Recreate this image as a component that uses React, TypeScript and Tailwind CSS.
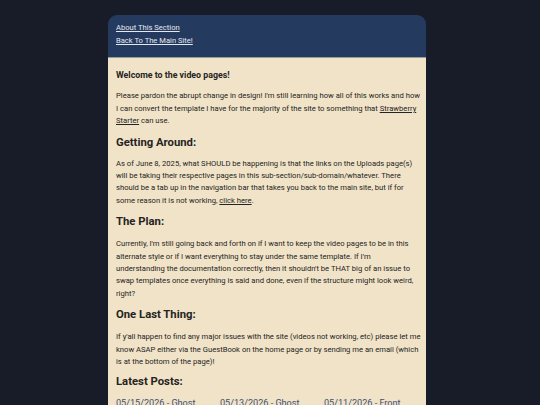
import React from 'react'

const posts = [
  '05/15/2026 - Ghost',
  '05/13/2026 - Ghost',
  '05/11/2026 - Front',
]

export default function App() {
  return (
    <div className="min-h-screen bg-[#181c29] pt-[15px] pr-[6px] font-['Roboto',sans-serif]">
      <div className="mx-auto w-[318px] overflow-hidden rounded-t-[9px]">
        <div className="bg-[#243a5e] px-2 pt-[6px] pb-[10px] text-[7.6px] leading-[13px] text-[#e3e8f1]">
          <a className="block underline" href="#">About This Section</a>
          <a className="block underline" href="#">Back To The Main Site!</a>
        </div>
        <div className="border-t border-[#9a9a9a] bg-[#f1e3c7] pl-2 pr-[4px] pt-[11px] pb-6 text-[7.65px] leading-[12.4px] text-[#242424]">
          <p className="mb-[9px] text-[8.8px] font-bold">Welcome to the video pages!</p>
          <p className="mb-[7px]">
            Please pardon the abrupt change in design! I'm still learning how all of this works and how I
            can convert the template I have for the majority of the site to something that{' '}
            <a className="underline" href="#">Strawberry Starter</a> can use.
          </p>
          <h2 className="mb-[7px] text-[11.3px] leading-[16px] font-bold">Getting Around:</h2>
          <p className="mb-[7px]">
            As of June 8, 2025, what SHOULD be happening is that the links on the Uploads page(s) will be
            taking their respective pages in this sub-section/sub-domain/whatever. There should be a tab
            up in the navigation bar that takes you back to the main site, but if for some reason it is
            not working, <a className="underline" href="#">click here</a>.
          </p>
          <h2 className="mb-[8px] text-[11.3px] leading-[16px] font-bold">The Plan:</h2>
          <p className="mb-[7px] pr-[3px]">
            Currently, I'm still going back and forth on if I want to keep the video pages to be in this
            alternate style or if I want everything to stay under the same template. If I'm understanding
            the documentation correctly, then it shouldn't be THAT big of an issue to swap templates once
            everything is said and done, even if the structure might look weird, right?
          </p>
          <h2 className="mb-[8px] text-[11.3px] leading-[16px] font-bold">One Last Thing:</h2>
          <p className="mb-[5px]">
            If y'all happen to find any major issues with the site (videos not working, etc) please let me
            know ASAP either via the GuestBook on the home page or by sending me an email (which is at the
            bottom of the page)!
          </p>
          <h2 className="mb-[7px] text-[11.3px] leading-[16px] font-bold">Latest Posts:</h2>
          <div className="grid grid-cols-[104px_104px_1fr] text-[9.1px] leading-[13px] text-[#3d4f72]">
            {posts.map((p) => (
              <div key={p}>{p}</div>
            ))}
          </div>
        </div>
      </div>
    </div>
  )
}
